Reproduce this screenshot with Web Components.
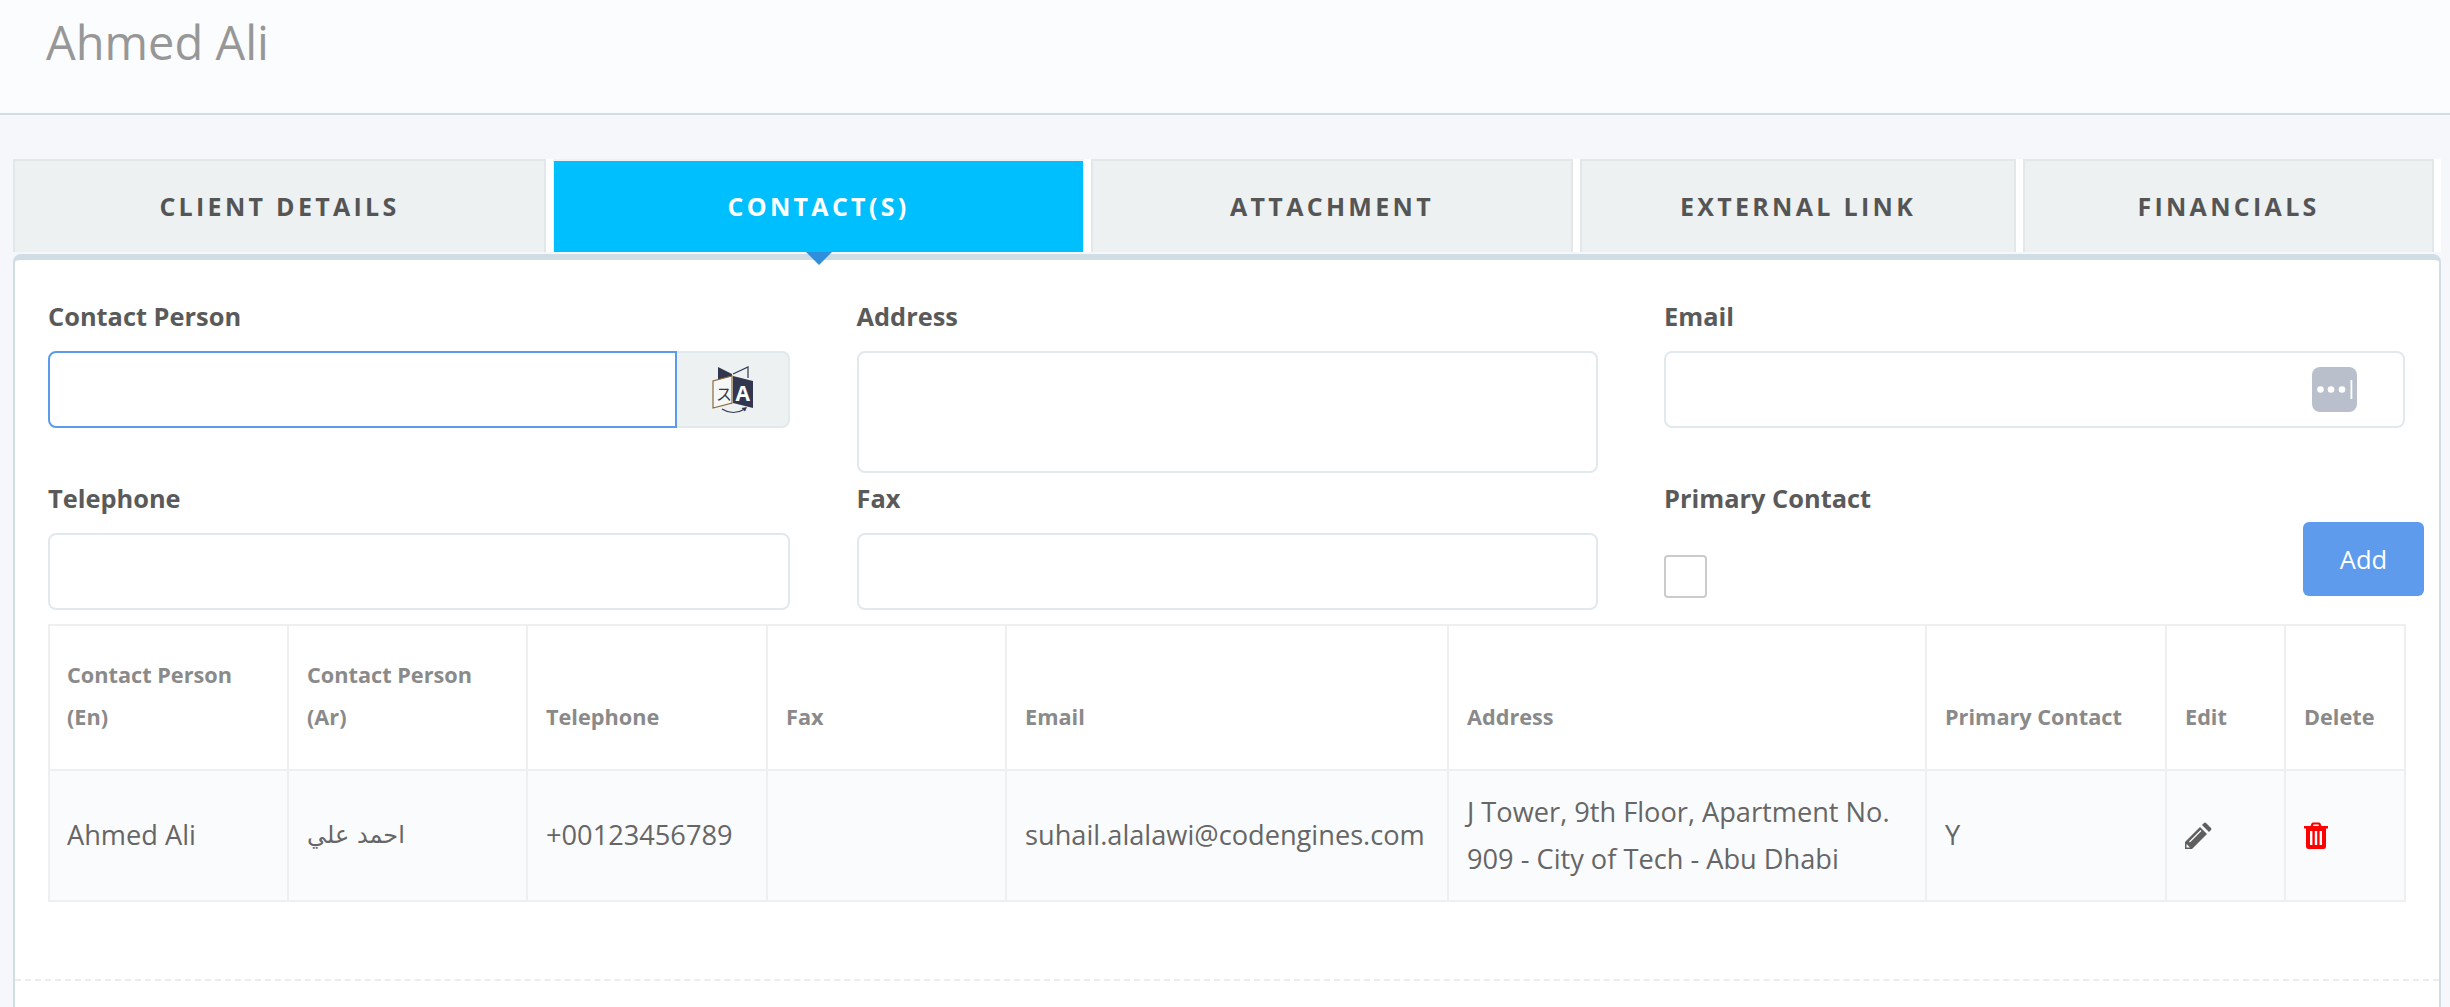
<!DOCTYPE html>
<html lang="en"><head><meta charset="utf-8"><title>Ahmed Ali</title>
<style>
html,body{margin:0;padding:0;height:100%;overflow:hidden;background:#f6f7fb;font-family:"Open Sans","DejaVu Sans",sans-serif;}
</style></head><body>
<client-page></client-page>
<template id="t-header"><style>
:host{display:block;height:113px;background:#fbfcfe;border-bottom:2px solid #d0dde4;padding-left:46px;box-sizing:content-box;}
h1{margin:0;font-weight:400;font-size:47px;line-height:84px;color:#979797;}
</style><h1><slot></slot></h1></template>

<template id="t-tabs"><style>
:host{display:flex;gap:7px;height:93px;margin:44px 9px 0 13px;background:#fff;position:relative;z-index:1;}
</style><slot></slot></template>

<template id="t-tab"><style>
:host{display:flex;align-items:center;justify-content:center;box-sizing:border-box;position:relative;height:93px;padding-bottom:2px;background:#edf1f2;border:2px solid #e2e8ea;border-bottom:0;font-weight:700;font-size:25px;letter-spacing:3.3px;color:#555;}
:host([active]){background:#00bfff;color:#fff;border-color:#eef1f3;border-left-width:1px;border-right-width:1px;}
:host([active])::after{content:"";position:absolute;left:50%;top:100%;margin-left:-13px;border-style:solid;border-width:13px 13px 0;border-color:#2f8fdc transparent transparent;}
</style><slot></slot></template>

<template id="t-field"><style>
:host{display:block;min-width:0;}
label{display:block;font-weight:700;font-size:25.4px;line-height:38px;margin-bottom:16px;color:#5a5a5a;}
.box{display:flex;box-sizing:border-box;height:77px;background:#fff;border:2px solid #e1e9ec;border-radius:8px;align-items:center;justify-content:flex-end;}
:host([tall]) .box{height:122px;}
:host([focus]) .box{border-color:#5c9aec;border-radius:8px 0 0 8px;}
:host([addon]) .wrap{display:grid;grid-template-columns:1fr 113px;}
.wrap{display:block;}
.addon{display:none;}
:host([addon]) .addon{display:flex;align-items:center;justify-content:center;height:77px;box-sizing:border-box;background:#edf1f2;border:2px solid #e1e9ec;border-left:0;border-radius:0 8px 8px 0;}
</style><label><slot name="label"></slot></label><div class="wrap"><div class="box"><slot name="inner"></slot></div><div class="addon"><slot name="addon"></slot></div></div></template>

<template id="t-primary"><style>
:host{display:flex;justify-content:space-between;align-items:flex-start;margin-right:-19px;}
label{display:block;font-weight:700;font-size:25.4px;line-height:38px;color:#5a5a5a;margin-bottom:38px;}
.cb{display:block;box-sizing:border-box;width:43px;height:43px;background:#fff;border:2px solid #cbcbcb;border-radius:4px;}
button{all:unset;box-sizing:border-box;width:121px;height:74px;margin-top:43px;background:#5e9bec;color:#fff;border-radius:6px;font:400 25.5px "Open Sans",sans-serif;text-align:center;line-height:74px;}
</style><div><label><slot></slot></label><span class="cb"></span></div><button>Add</button></template>

<template id="t-page"><style>
:host{display:block;}
.panel{box-sizing:border-box;margin:2px 9px 0 13px;height:760px;background:#fff;border:2px solid #d0dde4;border-top-width:6px;border-radius:8px 8px 0 0;position:relative;display:flex;flex-direction:column;}
.form{display:grid;grid-template-columns:742px 741px 741px;column-gap:66.5px;row-gap:6px;padding:37px 0 0 33px;}
contact-table{margin:14px 0 0 33px;}
.dash{margin-top:77px;border-top:2px dashed #e8edf0;}
svg{display:block;}
</style>
<page-header>Ahmed Ali</page-header>
<tab-bar>
<tab-item style="width:533px">CLIENT DETAILS</tab-item>
<tab-item active style="width:531px">CONTACT(S)</tab-item>
<tab-item style="width:482px">ATTACHMENT</tab-item>
<tab-item style="width:436px">EXTERNAL LINK</tab-item>
<tab-item style="width:411px">FINANCIALS</tab-item>
</tab-bar>
<div class="panel">
<div class="form">
<form-field focus addon><span slot="label">Contact Person</span>
<svg slot="addon" width="42" height="48" viewBox="0 0 42 48" style="display:block">
<path d="M6 1 L20 8 V38 L6 31 Z" fill="#32374f"/>
<path d="M21 8 L36 1 V12" fill="none" stroke="#32374f" stroke-width="1.2"/>
<path d="M20 10 L1 15 V42 L20 37 Z" fill="#f6f8f8" stroke="#8b6a3c" stroke-width="1.2"/>
<path d="M21 10 L41 15 V42 L21 37 Z" fill="#32374f"/>
<text x="4" y="34" font-family="'Noto Sans CJK JP',sans-serif" font-size="16" fill="#33384f">ス</text>
<text x="23.500" y="35" font-family="'Open Sans',sans-serif" font-weight="700" font-size="21" fill="#fff">A</text>
<path d="M10 43 Q21 50 33 43" fill="none" stroke="#32374f" stroke-width="1.2"/><path d="M35 41 L29.5 42 L33 45.500 Z" fill="#32374f"/>
</svg></form-field>
<form-field tall><span slot="label">Address</span></form-field>
<form-field><span slot="label">Email</span>
<svg slot="inner" width="45" height="45" viewBox="0 0 45 45" style="display:block;margin-right:46px"><rect width="45" height="45" rx="8" fill="#b9c0cb"/><circle cx="8.500" cy="22.500" r="3.300" fill="#fff"/><circle cx="19" cy="22.500" r="3.300" fill="#fff"/><circle cx="30" cy="22.500" r="3.300" fill="#fff"/><rect x="38.500" y="13" width="1.800" height="19" fill="#fff"/></svg></form-field>
<form-field><span slot="label">Telephone</span></form-field>
<form-field><span slot="label">Fax</span></form-field>
<primary-cell>Primary Contact</primary-cell>
</div>
<contact-table></contact-table>
<div class="dash"></div>
</div></template>

<template id="t-ctable"><style>
:host{display:block;}
table{border-collapse:collapse;table-layout:fixed;width:2356px;}
th,td{border:2px solid #eeeff1;padding:0 17px 0 18px;text-align:left;}
th:first-child,td:first-child{padding-left:17px;}
th{height:145px;vertical-align:bottom;font-weight:700;font-size:21.7px;line-height:42px;color:#8a8a8a;background:#fff;padding-bottom:31px;box-sizing:border-box;}
td{height:131px;background:#fafbfd;font-size:27.2px;line-height:46.500px;color:#666;box-sizing:border-box;}
.ar{font-family:"DejaVu Sans",sans-serif;font-size:24px;}
svg{display:block;}
</style><table><colgroup><col style="width:239px"><col style="width:239px"><col style="width:240px"><col style="width:239px"><col style="width:442px"><col style="width:478px"><col style="width:240px"><col style="width:119px"><col style="width:120px"></colgroup>
<thead><tr><th>Contact Person (En)</th><th>Contact Person (Ar)</th><th>Telephone</th><th>Fax</th><th>Email</th><th>Address</th><th>Primary Contact</th><th>Edit</th><th>Delete</th></tr></thead>
<tbody><tr><td>Ahmed Ali</td><td class="ar"><span dir="rtl">احمد علي</span></td><td>+00123456789</td><td></td><td>suhail.alalawi@codengines.com</td><td>J Tower, 9th Floor, Apartment No. 909 - City of Tech - Abu Dhabi</td><td>Y</td>
<td><svg width="27" height="27" viewBox="0 0 27 27"><path d="M0 20 L15 5 L22 12 L7 27 L0 27 Z" fill="#5f5f5f"/><path d="M17 3 L19 1 Q20 0 21 1 L26 6 Q27 7 26 8 L24 10 Z" fill="#5f5f5f"/><path d="M4.500 20 L16 8.500" stroke="#fff" stroke-width="1.300"/><path d="M1.500 22 L5 25.500 L1.500 25.500 Z" fill="#fff"/></svg></td>
<td><svg width="24" height="27" viewBox="0 0 24 27"><path d="M0 4 H6.500 L7.500 1.500 Q8 .5 9 .5 H15 Q16 .5 16.500 1.500 L17.500 4 H24 V6.500 H22 V24 Q22 27 19.500 27 H4.500 Q2 27 2 24 V6.500 H0 Z M9 4 H15 L14.500 2.600 H9.500 Z" fill="#f00" fill-rule="evenodd"/><rect x="6" y="9" width="2.400" height="14" fill="#fff"/><rect x="10.800" y="9" width="2.400" height="14" fill="#fff"/><rect x="15.600" y="9" width="2.400" height="14" fill="#fff"/></svg></td></tr></tbody></table></template>

<script>
function reg(name,tpl){customElements.define(name,class extends HTMLElement{constructor(){super();this.attachShadow({mode:"open"}).appendChild(document.getElementById(tpl).content.cloneNode(true));}});}
reg("page-header","t-header");reg("tab-bar","t-tabs");reg("tab-item","t-tab");reg("form-field","t-field");reg("primary-cell","t-primary");reg("contact-table","t-ctable");reg("client-page","t-page");
</script>
</body></html>
